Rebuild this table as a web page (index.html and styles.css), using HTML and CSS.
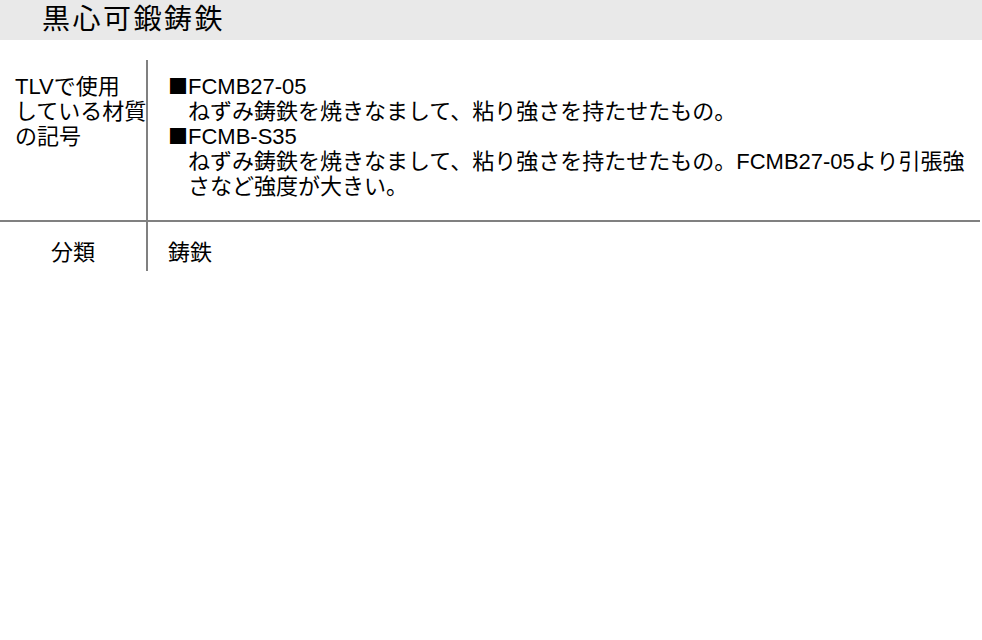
FILE: index.html
```html
<!DOCTYPE html>
<html lang="ja">
<head>
  <meta charset="UTF-8">
  <title>黒心可鍛鋳鉄</title>
  <link rel="stylesheet" href="styles.css">
</head>
<body>
  <h1 class="title">黒心可鍛鋳鉄</h1>

  <div class="spec">
    <div class="spec-row">
      <div class="spec-label">TLVで使用<br>している材質<br>の記号</div>
      <div class="spec-value">
        <p class="grade"><span class="mark">■</span>FCMB27-05</p>
        <p class="desc">ねずみ鋳鉄を焼きなまして、粘り強さを持たせたもの。</p>
        <p class="grade"><span class="mark">■</span>FCMB-S35</p>
        <p class="desc">ねずみ鋳鉄を焼きなまして、粘り強さを持たせたもの。FCMB27-05より引張強さなど強度が大きい。</p>
      </div>
    </div>
    <div class="spec-row last">
      <div class="spec-label center">分類</div>
      <div class="spec-value">鋳鉄</div>
    </div>
  </div>
</body>
</html>
```

FILE: styles.css
```css
* {
  box-sizing: border-box;
  margin: 0;
  padding: 0;
}
body {
  background-color: #fff;
  color: #000;
  font-family: "Liberation Sans", "Noto Sans CJK JP", sans-serif;
  font-size: 22px;
  line-height: 25px;
}
.title {
  height: 40px;
  padding-left: 42px;
  background-color: #e9e9e9;
  font-size: 28px;
  font-weight: normal;
  line-height: 40px;
  letter-spacing: 2.5px;
}
.spec {
  margin-top: 20px;
  width: 980px;
}
.spec-row {
  display: grid;
  grid-template-columns: 148px 1fr;
  border-bottom: 2px solid #808080;
}
.spec-row.last {
  border-bottom: none;
}
.spec-label {
  padding: 14px 0 0 15px;
  border-right: 2px solid #808080;
  white-space: nowrap;
}
.spec-label.center {
  padding: 18px 0 0;
  text-align: center;
}
.spec-value {
  padding: 14px 0 21px 20px;
}
.last .spec-value {
  padding: 18px 0 6px 20px;
}
.mark {
  font-family: "Noto Sans CJK JP", sans-serif;
  font-size: 20px;
  line-height: 0;
}
.desc {
  padding-left: 20px;
}
```
